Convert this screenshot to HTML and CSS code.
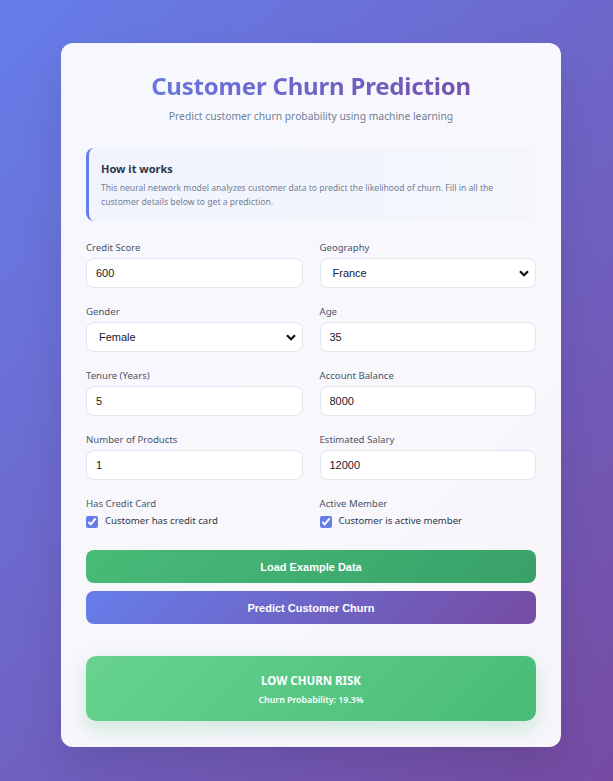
FILE: index.html
```html
<!DOCTYPE html>
<html lang="en">
<head>
<meta charset="utf-8">
<title>Customer Churn Prediction</title>
<link rel="stylesheet" href="styles.css">
</head>
<body>
<main class="card">
  <header class="head">
    <h1 class="title">Customer Churn Prediction</h1>
    <p class="subtitle">Predict customer churn probability using machine learning</p>
  </header>

  <section class="info">
    <h3 class="info-title">How it works</h3>
    <p class="info-text">This neural network model analyzes customer data to predict the likelihood of churn. Fill in all the customer details below to get a prediction.</p>
  </section>

  <form class="form">
    <div class="field">
      <label class="label">Credit Score</label>
      <input class="control" type="number" value="600">
    </div>
    <div class="field">
      <label class="label">Geography</label>
      <select class="control select"><option>France</option></select>
    </div>
    <div class="field">
      <label class="label">Gender</label>
      <select class="control select"><option>Female</option></select>
    </div>
    <div class="field">
      <label class="label">Age</label>
      <input class="control" type="number" value="35">
    </div>
    <div class="field">
      <label class="label">Tenure (Years)</label>
      <input class="control" type="number" value="5">
    </div>
    <div class="field">
      <label class="label">Account Balance</label>
      <input class="control" type="number" value="8000">
    </div>
    <div class="field">
      <label class="label">Number of Products</label>
      <input class="control" type="number" value="1">
    </div>
    <div class="field">
      <label class="label">Estimated Salary</label>
      <input class="control" type="number" value="12000">
    </div>
    <div class="field">
      <label class="label">Has Credit Card</label>
      <label class="check"><input type="checkbox" checked> Customer has credit card</label>
    </div>
    <div class="field">
      <label class="label">Active Member</label>
      <label class="check"><input type="checkbox" checked> Customer is active member</label>
    </div>
  </form>

  <div class="actions">
    <button class="btn btn-green" type="button">Load Example Data</button>
    <button class="btn btn-purple" type="button">Predict Customer Churn</button>
  </div>

  <section class="result">
    <div class="result-title">LOW CHURN RISK</div>
    <div class="result-sub">Churn Probability: 19.3%</div>
  </section>
</main>
</body>
</html>
```

FILE: styles.css
```css
* { box-sizing: border-box; }

html, body { height: 100%; }

body {
  margin: 0;
  min-height: 781px;
  background: linear-gradient(135deg, #667eea 0%, #764ba2 100%);
  font-family: "Noto Sans", "Open Sans", sans-serif;
  display: flex;
  justify-content: flex-start;
  padding: 43px 0 0 61px;
}

.card {
  width: 500px;
  height: 704px;
  background: rgba(255, 255, 255, 0.95);
  border-radius: 12px;
  padding: 26px 25px;
  box-shadow: 0 20px 40px rgba(0, 0, 0, 0.1);
}

.head { text-align: center; }

.title {
  margin: 0;
  font-size: 24px;
  font-weight: 700;
  line-height: 32px;
  margin-top: 1px;
  background: linear-gradient(90deg, #667eea, #764ba2);
  -webkit-background-clip: text;
  background-clip: text;
  color: transparent;
  letter-spacing: -0.2px;
}

.subtitle {
  margin: 6px 0 0;
  font-size: 10.3px;
  line-height: 16px;
  color: #718096;
}

.info {
  margin-top: 24px;
  border-left: 3px solid #667eea;
  border-radius: 8px;
  padding: 13px 14px 12px 12px;
  background: linear-gradient(90deg, #f1f4fd, #f4f6fc);
}

.info-title {
  margin: 0;
  font-size: 11px;
  font-weight: 700;
  line-height: 16px;
  color: #2d3748;
}

.info-text {
  margin: 4px 0 0;
  font-size: 8.6px;
  line-height: 14px;
  color: #718096;
}

.form {
  margin-top: 20px;
  display: grid;
  grid-template-columns: 1fr 1fr;
  column-gap: 17px;
  row-gap: 17px;
}

.field { display: flex; flex-direction: column; }

.label {
  font-size: 9.6px;
  line-height: 14px;
  color: #4a5568;
  margin-bottom: 3px;
}

.control {
  height: 30px;
  border: 1px solid #e2e8f0;
  border-radius: 8px;
  background: #fff;
  font-family: "Liberation Sans", Arial, sans-serif;
  font-size: 11px;
  color: #1a202c;
  padding: 0 9px;
  outline: none;
}

.control::-webkit-inner-spin-button,
.control::-webkit-outer-spin-button { -webkit-appearance: none; margin: 0; }

.select {
  -webkit-appearance: none;
  appearance: none;
  padding-left: 12px;
  background-image: url("data:image/svg+xml;utf8,<svg xmlns='http://www.w3.org/2000/svg' width='10' height='7' viewBox='0 0 10 7'><path d='M1 1.2 L5 5.2 L9 1.2' fill='none' stroke='%23111' stroke-width='2.2'/></svg>");
  background-repeat: no-repeat;
  background-position: right 6px center;
  background-size: 10px 7px;
}

.check {
  display: flex;
  align-items: center;
  gap: 7px;
  font-size: 9.6px;
  line-height: 14px;
  color: #2d3748;
  margin-top: 0;
}

.check input {
  margin: 0;
  width: 12px;
  height: 12px;
  accent-color: #667eea;
  position: relative;
  top: 1px;
}

.actions {
  margin-top: 22px;
  display: flex;
  flex-direction: column;
  gap: 8px;
}

.btn {
  height: 33px;
  border: none;
  border-radius: 8px;
  color: #fff;
  font-family: "Liberation Sans", Arial, sans-serif;
  font-size: 11px;
  font-weight: 700;
}

.btn-green { background: linear-gradient(135deg, #48bb78 0%, #38a169 100%); }
.btn-purple { background: linear-gradient(135deg, #667eea 0%, #764ba2 100%); }

.result {
  margin-top: 32px;
  height: 65px;
  border-radius: 10px;
  background: linear-gradient(135deg, #68d391 0%, #48bb78 100%);
  color: #fff;
  text-align: center;
  padding-top: 16px;
  box-shadow: 0 8px 20px rgba(72, 187, 120, 0.25);
}

.result-title {
  font-size: 11.5px;
  font-weight: 700;
  line-height: 17px;
}

.result-sub {
  margin-top: 5px;
  font-size: 8.8px;
  font-weight: 600;
  line-height: 12px;
}
```
